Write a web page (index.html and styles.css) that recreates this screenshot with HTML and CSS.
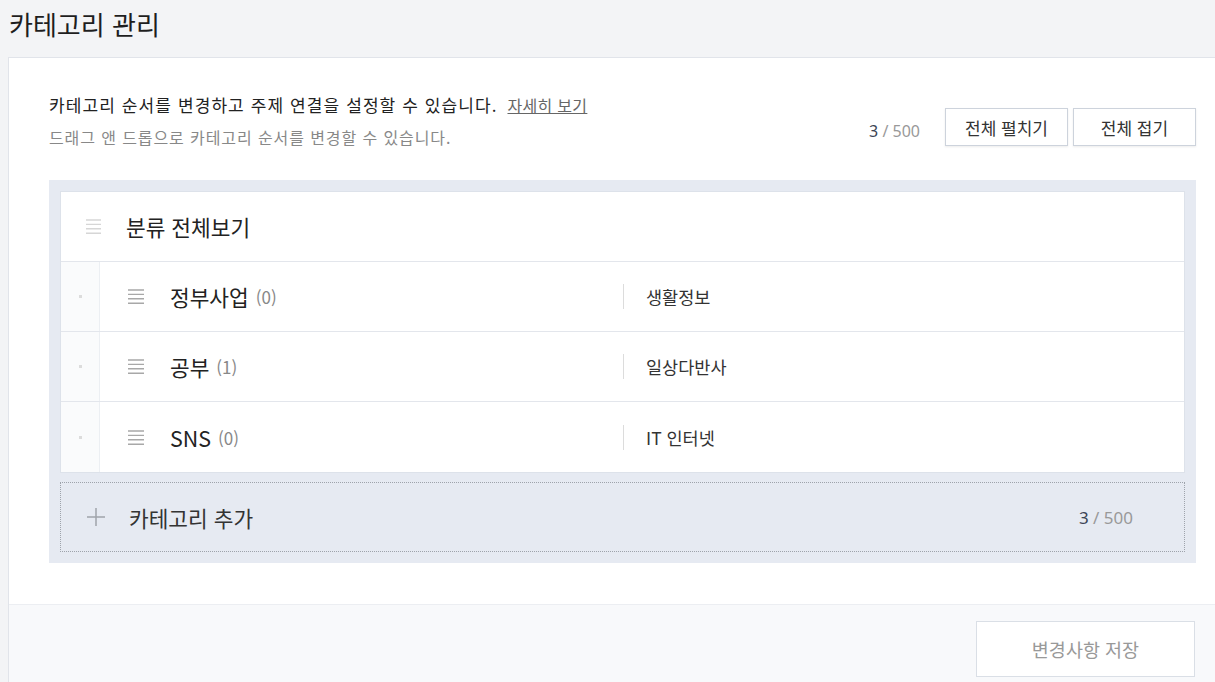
FILE: index.html
```html
<!DOCTYPE html>
<html lang="ko">
<head>
<meta charset="utf-8">
<title>카테고리 관리</title>
<link rel="stylesheet" href="styles.css">
</head>
<body>
<h1 class="page-title">카테고리 관리</h1>
<div class="card">
  <div class="card-body">
    <div class="header">
      <div class="desc">
        <p class="desc-main">카테고리 순서를 변경하고 주제 연결을 설정할 수 있습니다. <a class="desc-link" href="#">자세히 보기</a></p>
        <p class="desc-sub">드래그 앤 드롭으로 카테고리 순서를 변경할 수 있습니다.</p>
      </div>
      <div class="header-actions">
        <span class="counter"><span class="counter-num">3</span> / 500</span>
        <button class="btn">전체 펼치기</button>
        <button class="btn">전체 접기</button>
      </div>
    </div>

    <div class="list-wrap">
      <div class="list">
        <div class="row row-all">
          <svg class="drag drag-light" width="15" height="15" viewBox="0 0 15 15"><path d="M0 1H15M0 5.4H15M0 9.8H15M0 14.2H15" stroke="currentColor" stroke-width="1.4"/></svg>
          <span class="row-all-title">분류 전체보기</span>
        </div>
        <div class="row row-item">
          <div class="row-handle"><span class="dot"></span></div>
          <div class="row-name">
            <svg class="drag" width="16" height="15" viewBox="0 0 16 15"><path d="M0 1H16M0 5.4H16M0 9.8H16M0 14.2H16" stroke="currentColor" stroke-width="1.4"/></svg>
            <span class="name">정부사업</span><span class="count">(0)</span>
          </div>
          <div class="sep"></div>
          <div class="topic">생활정보</div>
        </div>
        <div class="row row-item">
          <div class="row-handle"><span class="dot"></span></div>
          <div class="row-name">
            <svg class="drag" width="16" height="15" viewBox="0 0 16 15"><path d="M0 1H16M0 5.4H16M0 9.8H16M0 14.2H16" stroke="currentColor" stroke-width="1.4"/></svg>
            <span class="name">공부</span><span class="count">(1)</span>
          </div>
          <div class="sep"></div>
          <div class="topic">일상다반사</div>
        </div>
        <div class="row row-item">
          <div class="row-handle"><span class="dot"></span></div>
          <div class="row-name">
            <svg class="drag" width="16" height="15" viewBox="0 0 16 15"><path d="M0 1H16M0 5.4H16M0 9.8H16M0 14.2H16" stroke="currentColor" stroke-width="1.4"/></svg>
            <span class="name">SNS</span><span class="count">(0)</span>
          </div>
          <div class="sep"></div>
          <div class="topic">IT 인터넷</div>
        </div>
      </div>

      <div class="add-row">
        <svg class="plus" width="18" height="18" viewBox="0 0 18 18"><path d="M9 0V18M0 9H18" stroke="currentColor" stroke-width="1.5"/></svg>
        <span class="add-title">카테고리 추가</span>
        <span class="counter add-counter"><span class="counter-num">3</span> / 500</span>
      </div>
    </div>
  </div>
  <div class="card-footer">
    <button class="btn-save" disabled>변경사항 저장</button>
  </div>
</div>
</body>
</html>
```

FILE: styles.css
```css
html, body {
  margin: 0;
  padding: 0;
}
body {
  width: 1215px;
  height: 682px;
  overflow: hidden;
  background: #f3f4f6;
  font-family: "Noto Sans CJK KR", "Noto Sans", sans-serif;
  color: #222;
}
.page-title {
  margin: 0 0 14px 0;
  padding: 6px 0 0 9px;
  font-size: 26px;
  font-weight: 400;
  line-height: 36px;
  height: 37px;
  color: #1e1e1e;
}
.card {
  margin-left: 8px;
  width: 1228px;
  box-sizing: border-box;
  background: #fff;
  border: 1px solid #e1e4ea;
  border-right: none;
}
.card-body {
  padding: 36px 40px 41px 40px;
}
.header {
  display: flex;
  justify-content: space-between;
  align-items: flex-end;
}
.desc p {
  margin: 0;
}
.desc-main {
  font-size: 17px;
  line-height: 22px;
  height: 22px;
  letter-spacing: 1.1px;
  color: #222;
}
.desc-link {
  margin-left: 4px;
  font-size: 16px;
  line-height: 1;
  letter-spacing: 0.3px;
  color: #666;
  text-decoration: underline;
}
.desc-sub {
  margin-top: 10px !important;
  font-size: 16px;
  line-height: 22px;
  letter-spacing: 0.9px;
  color: #888;
}
.header-actions {
  display: flex;
  align-items: center;
  gap: 5px;
  margin-bottom: 2px;
}
.counter {
  font-size: 16px;
  color: #999;
  font-family: "Noto Sans", "Noto Sans CJK KR", sans-serif;
}
.counter-num {
  color: #3c4555;
}
.header-actions .counter {
  margin-right: 20px;
  padding-top: 8px;
}
.btn {
  width: 123px;
  height: 38px;
  box-sizing: border-box;
  border: 1px solid #cdd3dc;
  background: #fff;
  box-shadow: 0 1px 2px rgba(0, 0, 0, 0.08);
  font-family: inherit;
  font-size: 17px;
  color: #333;
  padding: 0;
}
.list-wrap {
  margin-top: 32px;
  background: #e6eaf2;
  padding: 11px;
}
.list {
  background: #fff;
  border: 1px solid #dde2ea;
}
.row {
  height: 69px;
  border-bottom: 1px solid #e3e6ec;
  display: flex;
  align-items: center;
}
.row:last-child {
  border-bottom: none;
  height: 70px;
}
.row-all {
  padding-left: 25px;
  gap: 25px;
}
.drag {
  color: #a8a8a8;
  flex: none;
}
.drag-light {
  color: #d6d6d6;
}
.row-all-title {
  font-size: 21.4px;
  color: #222;
}
.row-handle {
  width: 38px;
  align-self: stretch;
  background: #fafbfc;
  border-right: 1px solid #eceff3;
  display: flex;
  align-items: center;
  justify-content: center;
}
.dot {
  width: 3px;
  height: 3px;
  background: #dcdcdc;
}
.row-name {
  width: 523px;
  box-sizing: border-box;
  padding-left: 28px;
  display: flex;
  align-items: center;
}
.row-name .drag {
  margin-right: 26px;
}
.name {
  font-size: 21.4px;
  color: #222;
}
.count {
  margin-left: 7px;
  font-size: 17px;
  color: #888;
}
.sep {
  width: 1px;
  height: 25px;
  background: #dcdcdc;
}
.topic {
  padding-left: 22px;
  font-size: 17.5px;
  color: #333;
}
.add-row {
  margin-top: 9px;
  height: 70px;
  box-sizing: border-box;
  border: 1px dotted #9ea3ab;
  display: flex;
  align-items: center;
  padding-left: 26px;
  padding-right: 51px;
}
.plus {
  color: #a0a4aa;
  margin-right: 24px;
  flex: none;
}
.add-title {
  font-size: 21.4px;
  color: #333;
  flex: 1;
}
.add-counter {
  font-size: 17px;
}
.card-footer {
  border-top: 1px solid #eceef2;
  background: #f8f9fb;
  padding: 16px 40px 20px 40px;
  display: flex;
  justify-content: flex-end;
}
.btn-save {
  width: 219px;
  height: 56px;
  box-sizing: border-box;
  border: 1px solid #dadfe6;
  background: #fff;
  font-family: inherit;
  font-size: 18.5px;
  color: #999;
  margin-right: 1px;
}
```
